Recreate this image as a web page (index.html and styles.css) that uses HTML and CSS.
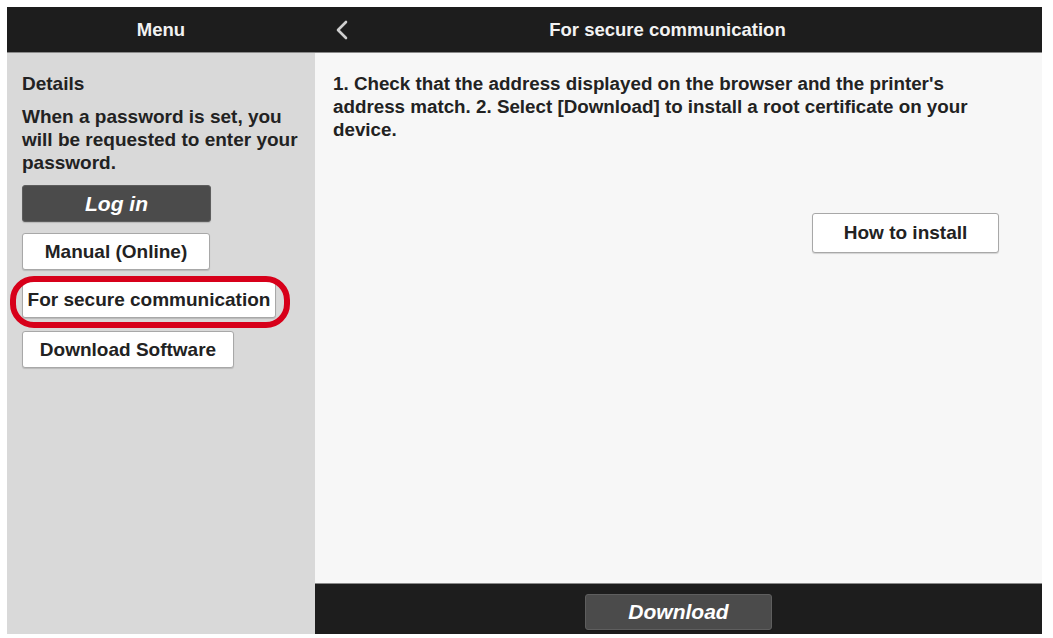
FILE: index.html
```html
<!DOCTYPE html>
<html lang="en">
  <head>
    <meta charset="UTF-8" />
    <meta name="viewport" content="width=device-width, initial-scale=1.0" />
    <title>For secure communication</title>
    <link rel="stylesheet" href="styles.css">
  </head>
  <body>
    <div class="frame">
      <div class="sidebar">
        <div class="head">Menu</div>
        <div class="side-body">
          <h3>Details</h3>
          <p>When a password is set, you will be requested to enter your password.</p>
          <button class="btn dark login">Log in</button>
          <button class="btn w-manual">Manual (Online)</button>
          <div class="marked">
            <button class="btn w-secure">For secure communication</button>
            <span class="ring"></span>
          </div>
          <button class="btn w-soft">Download Software</button>
        </div>
      </div>
      <div class="main">
        <div class="head main-head">
          <svg class="back" width="14" height="20" viewBox="0 0 14 20">
            <path d="M11 2 L3 10 L11 18" fill="none" stroke="#cfcfcf" stroke-width="2.6" stroke-linecap="round" stroke-linejoin="round"/>
          </svg>
          <span class="title">For secure communication</span>
        </div>
        <div class="content">
          <p class="info">1. Check that the address displayed on the browser and the printer's address match. 2. Select [Download] to install a root certificate on your device.</p>
          <div class="right">
            <button class="btn w-howto">How to install</button>
          </div>
        </div>
        <div class="footer">
          <button class="btn dark download">Download</button>
        </div>
      </div>
    </div>
  </body>
</html>
```

FILE: styles.css
```css
body {
  margin: 0;
  padding: 7px;
  background: #fff;
  font-family: "Liberation Sans", Arial, sans-serif;
  color: #222;
}
.frame {
  display: flex;
  width: 1035px;
  height: 627px;
}
.sidebar {
  width: 308px;
  display: flex;
  flex-direction: column;
}
.head {
  height: 45px;
  background: #1d1d1d;
  border-bottom: 1px solid #8a8a8a;
  color: #f2f2f2;
  font-weight: bold;
  font-size: 18.5px;
  display: flex;
  align-items: center;
  justify-content: center;
}
.side-body {
  flex: 1;
  background: #d9d9d9;
  padding: 19px 6px 0 15px;
}
.side-body h3 {
  margin: 0 0 10px 0;
  font-size: 19px;
  line-height: 23px;
}
.side-body p {
  margin: 0 0 11px 0;
  font-size: 19px;
  line-height: 23px;
  font-weight: bold;
}
.btn {
  display: block;
  height: 37px;
  padding: 0;
  margin: 0 0 11px 0;
  background: #fff;
  border: 1px solid #a8a8a8;
  border-radius: 3px;
  box-shadow: 0 1px 1px rgba(0, 0, 0, 0.15);
  font-family: "Liberation Sans", Arial, sans-serif;
  font-size: 19px;
  font-weight: bold;
  color: #222;
  white-space: nowrap;
}
.btn.dark {
  background: #4b4b4b;
  border-color: #5e5e5e;
  color: #fff;
  font-style: italic;
  font-size: 21px;
}
.login { width: 189px; }
.w-manual { width: 188px; }
.w-secure { width: 254px; margin-bottom: 13px; }
.w-soft { width: 212px; }
.marked {
  position: relative;
}
.ring {
  position: absolute;
  left: -12px;
  top: -5px;
  width: 268px;
  height: 40px;
  border: 6px solid #d7001a;
  border-radius: 24px;
}
.main {
  flex: 1;
  display: flex;
  flex-direction: column;
}
.main-head {
  justify-content: flex-start;
  padding-left: 20px;
}
.back {
  flex: none;
}
.title {
  flex: 1;
  text-align: center;
  padding-right: 56px;
}
.content {
  flex: 1;
  background: #f7f7f7;
  padding: 19px 50px 0 18px;
}
.info {
  margin: 0;
  font-size: 18.8px;
  line-height: 23px;
  font-weight: bold;
}
.right {
  display: flex;
  justify-content: flex-end;
  margin-top: 72px;
  margin-right: -7px;
}
.w-howto {
  width: 187px;
  height: 40px;
}
.footer {
  height: 51px;
  background: #1d1d1d;
  border-top: 1px solid #8a8a8a;
  display: flex;
  justify-content: center;
  padding-top: 10px;
  box-sizing: border-box;
}
.download {
  width: 187px;
  height: 36px;
  margin: 0;
}
```
